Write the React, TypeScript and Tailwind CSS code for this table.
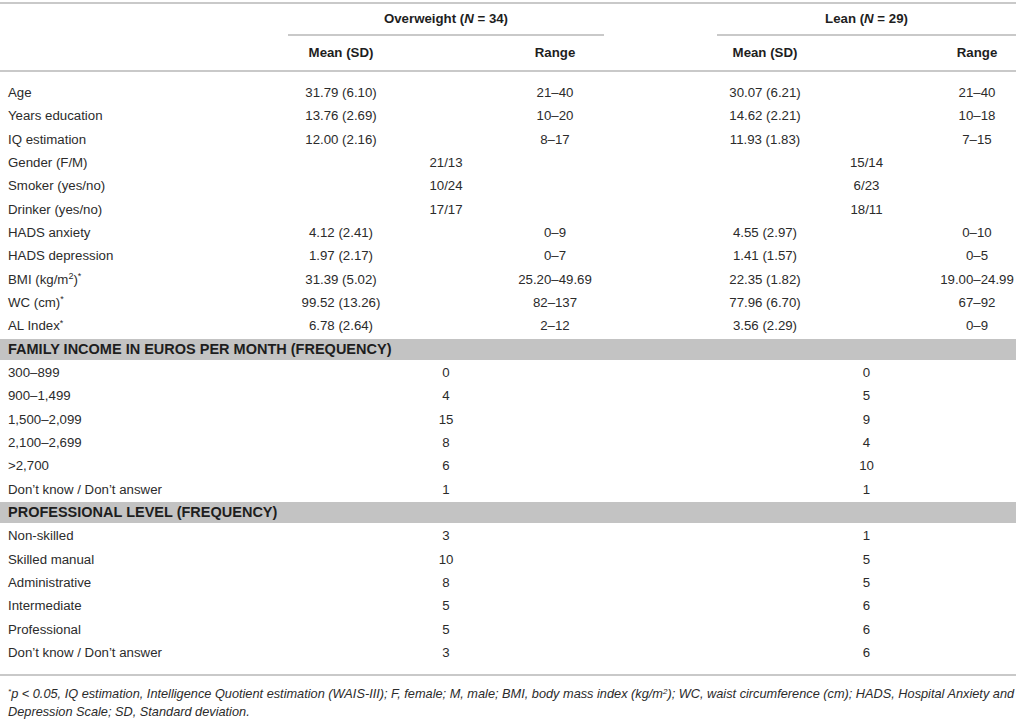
import React from "react";

const COLS = "grid grid-cols-[288px_106px_112px_98px_113px_96px_125px_78px]";

type Stat = { label: React.ReactNode; om: string; or: string; lm: string; lr: string };
type Freq = { label: React.ReactNode; o: string; l: string };

const stats1: Stat[] = [
  { label: "Age", om: "31.79 (6.10)", or: "21–40", lm: "30.07 (6.21)", lr: "21–40" },
  { label: "Years education", om: "13.76 (2.69)", or: "10–20", lm: "14.62 (2.21)", lr: "10–18" },
  { label: "IQ estimation", om: "12.00 (2.16)", or: "8–17", lm: "11.93 (1.83)", lr: "7–15" },
];
const freq1: Freq[] = [
  { label: "Gender (F/M)", o: "21/13", l: "15/14" },
  { label: "Smoker (yes/no)", o: "10/24", l: "6/23" },
  { label: "Drinker (yes/no)", o: "17/17", l: "18/11" },
];
const stats2: Stat[] = [
  { label: "HADS anxiety", om: "4.12 (2.41)", or: "0–9", lm: "4.55 (2.97)", lr: "0–10" },
  { label: "HADS depression", om: "1.97 (2.17)", or: "0–7", lm: "1.41 (1.57)", lr: "0–5" },
  {
    label: (
      <>
        BMI (kg/m<sup className="text-[9px]">2</sup>)<sup className="text-[9px]">*</sup>
      </>
    ),
    om: "31.39 (5.02)",
    or: "25.20–49.69",
    lm: "22.35 (1.82)",
    lr: "19.00–24.99",
  },
  {
    label: (
      <>
        WC (cm)<sup className="text-[9px]">*</sup>
      </>
    ),
    om: "99.52 (13.26)",
    or: "82–137",
    lm: "77.96 (6.70)",
    lr: "67–92",
  },
  {
    label: (
      <>
        AL Index<sup className="text-[9px]">*</sup>
      </>
    ),
    om: "6.78 (2.64)",
    or: "2–12",
    lm: "3.56 (2.29)",
    lr: "0–9",
  },
];
const income: Freq[] = [
  { label: "300–899", o: "0", l: "0" },
  { label: "900–1,499", o: "4", l: "5" },
  { label: "1,500–2,099", o: "15", l: "9" },
  { label: "2,100–2,699", o: "8", l: "4" },
  { label: ">2,700", o: "6", l: "10" },
  { label: "Don’t know / Don’t answer", o: "1", l: "1" },
];
const prof: Freq[] = [
  { label: "Non-skilled", o: "3", l: "1" },
  { label: "Skilled manual", o: "10", l: "5" },
  { label: "Administrative", o: "8", l: "5" },
  { label: "Intermediate", o: "5", l: "6" },
  { label: "Professional", o: "5", l: "6" },
  { label: "Don’t know / Don’t answer", o: "3", l: "6" },
];

function C({ children, cls }: { children: React.ReactNode; cls: string }) {
  return <div className={`flex justify-center whitespace-nowrap ${cls}`}>{children}</div>;
}

function StatRow({ r }: { r: Stat }) {
  return (
    <div className={`${COLS} h-[23.33px] items-center`}>
      <div className="pl-[8px] whitespace-nowrap">{r.label}</div>
      <C cls="col-start-2">{r.om}</C>
      <C cls="col-start-4">{r.or}</C>
      <C cls="col-start-6">{r.lm}</C>
      <C cls="col-start-8">{r.lr}</C>
    </div>
  );
}

function FreqRow({ r }: { r: Freq }) {
  return (
    <div className={`${COLS} h-[23.33px] items-center`}>
      <div className="pl-[8px] whitespace-nowrap">{r.label}</div>
      <C cls="col-start-2 col-span-3">{r.o}</C>
      <C cls="col-start-6 col-span-3">{r.l}</C>
    </div>
  );
}

function Band({ text }: { text: string }) {
  return (
    <div className="h-[23.33px] flex items-center">
      <div className="w-full h-[21px] bg-[#c3c3c3] flex items-center pl-[8px] font-bold text-[14.5px] text-[#1e1e1e] whitespace-nowrap">
        {text}
      </div>
    </div>
  );
}

export default function App() {
  return (
    <div
      className="w-[1016px] h-[719px] bg-white text-[#2b2b2b] text-[13.25px] leading-none overflow-hidden"
      style={{ fontFamily: '"Liberation Sans", Arial, Helvetica, sans-serif' }}
    >
      <div className="h-[2px]" />
      <div className="h-[2px] bg-[#c9c9c9]" />
      {/* header row 1 */}
      <div className={`${COLS} h-[32px] font-bold text-[#1e1e1e]`}>
        <div />
        <div className="col-start-2 col-span-3 flex items-center justify-center border-b-[2px] border-[#c9c9c9]">
          Overweight (<i>N</i>&nbsp;=&nbsp;34)
        </div>
        <div className="col-start-6 col-span-3 flex items-center justify-center border-b-[2px] border-[#c9c9c9]">
          Lean (<i>N</i>&nbsp;=&nbsp;29)
        </div>
      </div>
      {/* header row 2 */}
      <div className={`${COLS} h-[34px] items-center font-bold text-[#1e1e1e]`}>
        <C cls="col-start-2">Mean (SD)</C>
        <C cls="col-start-4">Range</C>
        <C cls="col-start-6">Mean (SD)</C>
        <C cls="col-start-8">Range</C>
      </div>
      <div className="h-[2px] bg-[#c9c9c9]" />
      <div className="h-[9px]" />
      {stats1.map((r, i) => (
        <StatRow key={"s1" + i} r={r} />
      ))}
      {freq1.map((r, i) => (
        <FreqRow key={"f1" + i} r={r} />
      ))}
      {stats2.map((r, i) => (
        <StatRow key={"s2" + i} r={r} />
      ))}
      <Band text="FAMILY INCOME IN EUROS PER MONTH (FREQUENCY)" />
      {income.map((r, i) => (
        <FreqRow key={"in" + i} r={r} />
      ))}
      <Band text="PROFESSIONAL LEVEL (FREQUENCY)" />
      {prof.map((r, i) => (
        <FreqRow key={"pr" + i} r={r} />
      ))}
      <div className="h-[10px]" />
      <div className="h-[2px] bg-[#c9c9c9]" />
      <div className="pt-[9px] pl-[8px] italic text-[12.75px] leading-[18px] whitespace-nowrap">
        <sup className="text-[8px]">*</sup>p &lt; 0.05, IQ estimation, Intelligence Quotient estimation (WAIS-III); F, female; M,
        male; BMI, body mass index (kg/m<sup className="text-[8px]">2</sup>); WC, waist circumference (cm); HADS, Hospital
        Anxiety and
        <br />
        Depression Scale; SD, Standard deviation.
      </div>
    </div>
  );
}
